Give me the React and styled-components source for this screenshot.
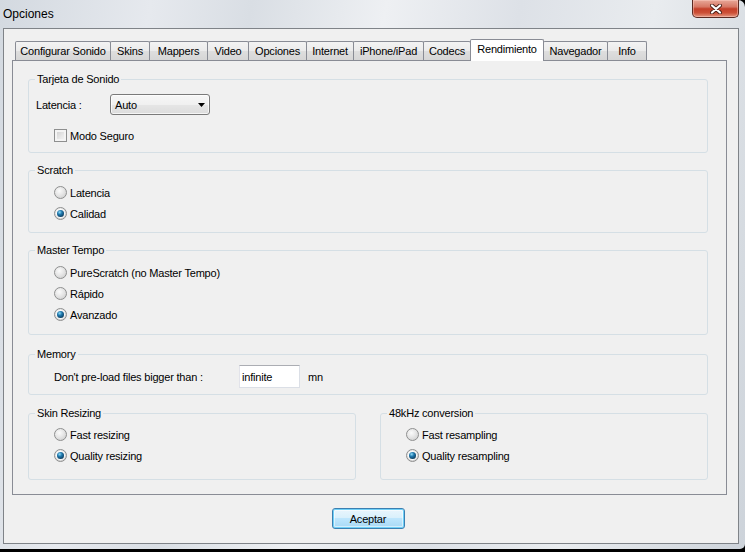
import React from "react";
import styled, { createGlobalStyle } from "styled-components";

const GlobalStyle = createGlobalStyle`
  html, body {
    margin: 0;
    padding: 0;
    background: #000;
  }
  body {
    width: 745px;
    height: 552px;
    overflow: hidden;
    font-family: "Liberation Sans", Arial, sans-serif;
    font-size: 11px;
    letter-spacing: -0.2px;
    color: #000;
  }
`;

const tabs = [
  { label: "Configurar Sonido", w: 96 },
  { label: "Skins", w: 40 },
  { label: "Mappers", w: 59 },
  { label: "Video", w: 42 },
  { label: "Opciones", w: 59 },
  { label: "Internet", w: 48 },
  { label: "iPhone/iPad", w: 71 },
  { label: "Codecs", w: 48 },
  { label: "Rendimiento", w: 74, active: true },
  { label: "Navegador", w: 65 },
  { label: "Info", w: 40 },
];

const CloseIcon = () => (
  <svg width="12" height="10" viewBox="0 0 12 10">
    <path d="M2 1.5 L10 8.5 M10 1.5 L2 8.5" stroke="#4a2018" strokeWidth="4" strokeLinecap="round" />
    <path d="M2 1.5 L10 8.5 M10 1.5 L2 8.5" stroke="#ffffff" strokeWidth="2.2" strokeLinecap="round" />
  </svg>
);

const ArrowDown = () => (
  <svg width="7" height="4" viewBox="0 0 7 4">
    <path d="M0 0 H7 L3.5 4 Z" fill="#000" />
  </svg>
);

const Radio = ({ checked, children }) => (
  <OptionRow>
    <RadioCircle>{checked && <RadioDot />}</RadioCircle>
    <OptionText>{children}</OptionText>
  </OptionRow>
);

const App = () => {
  return (
    <>
      <GlobalStyle />
      <Window>
        <TitleBar>
          <Title>Opciones</Title>
          <CloseButton>
            <CloseIcon />
          </CloseButton>
        </TitleBar>
        <Client>
          <TabStrip>
            {tabs.map((t) => (
              <Tab key={t.label} $w={t.w} $active={t.active}>
                {t.label}
              </Tab>
            ))}
          </TabStrip>
          <Panel>
            <Group $h={80}>
              <Legend>Tarjeta de Sonido</Legend>
              <GroupBody $pt={8} $pl={7}>
                <FieldRow $h={21}>
                  <FieldLabel $w={74}>Latencia :</FieldLabel>
                  <Combo>
                    <span>Auto</span>
                    <ArrowDown />
                  </Combo>
                </FieldRow>
                <OptionRow $mt={10} $ml={18}>
                  <CheckBox />
                  <OptionText>Modo Seguro</OptionText>
                </OptionRow>
              </GroupBody>
            </Group>

            <Group $h={69} $mt={11}>
              <Legend>Scratch</Legend>
              <GroupBody $pt={5} $pl={25}>
                <Radio>Latencia</Radio>
                <Radio checked>Calidad</Radio>
              </GroupBody>
            </Group>

            <Group $h={91} $mt={11}>
              <Legend>Master Tempo</Legend>
              <GroupBody $pt={5} $pl={25}>
                <Radio>PureScratch (no Master Tempo)</Radio>
                <Radio>Rápido</Radio>
                <Radio checked>Avanzado</Radio>
              </GroupBody>
            </Group>

            <Group $h={47} $mt={13}>
              <Legend>Memory</Legend>
              <GroupBody $pt={4} $pl={25}>
                <FieldRow $h={23}>
                  <FieldLabel $w={185}>Don't pre-load files bigger than :</FieldLabel>
                  <TextInput defaultValue="infinite" />
                  <Unit>mn</Unit>
                </FieldRow>
              </GroupBody>
            </Group>

            <Pair>
              <Group $h={73} $flex>
                <Legend>Skin Resizing</Legend>
                <GroupBody $pt={4} $pl={25}>
                  <Radio>Fast resizing</Radio>
                  <Radio checked>Quality resizing</Radio>
                </GroupBody>
              </Group>
              <Group $h={73} $flex>
                <Legend>48kHz conversion</Legend>
                <GroupBody $pt={4} $pl={25}>
                  <Radio>Fast resampling</Radio>
                  <Radio checked>Quality resampling</Radio>
                </GroupBody>
              </Group>
            </Pair>
          </Panel>
          <Footer>
            <DefaultButton>Aceptar</DefaultButton>
          </Footer>
        </Client>
      </Window>
    </>
  );
};

export default App;

const Window = styled.div`
  box-sizing: border-box;
  width: 745px;
  height: 549px;
  padding: 0 6px 6px 3px;
  display: flex;
  flex-direction: column;
  border-radius: 0 7px 5px 0;
  background: linear-gradient(
    100deg,
    #d3d9e0 0%,
    #e6e9ee 18%,
    #d9dee4 30%,
    #eef0f3 46%,
    #dde1e7 62%,
    #e9ecef 78%,
    #cdd3da 100%
  );
`;

const TitleBar = styled.div`
  height: 28px;
  display: flex;
  justify-content: space-between;
  align-items: flex-start;
`;

const Title = styled.div`
  font-size: 12px;
  letter-spacing: 0;
  line-height: 28px;
  color: #000;
`;

const CloseButton = styled.div`
  box-sizing: border-box;
  width: 47px;
  height: 18px;
  display: flex;
  align-items: center;
  justify-content: center;
  border: 1px solid #5b2a22;
  border-top: none;
  border-radius: 0 0 5px 5px;
  background: linear-gradient(
    #e8a898 0%,
    #d77865 40%,
    #c4402a 52%,
    #cc4f36 75%,
    #e39680 100%
  );
  box-shadow: inset 0 0 0 1px rgba(255, 210, 200, 0.45);
`;

const Client = styled.div`
  flex: 1;
  display: flex;
  flex-direction: column;
  border: 1px solid #7f8388;
  background: #f0f0f0;
  padding: 10px 11px 0 8px;
`;

const TabStrip = styled.div`
  height: 21px;
  display: flex;
  align-items: flex-end;
  padding-left: 3px;
`;

const Tab = styled.div`
  position: relative;
  box-sizing: border-box;
  width: ${(p) => p.$w}px;
  height: ${(p) => (p.$active ? 22 : 19)}px;
  margin-left: -1px;
  margin-bottom: ${(p) => (p.$active ? -1 : 0)}px;
  padding-bottom: ${(p) => (p.$active ? 3 : 0)}px;
  z-index: ${(p) => (p.$active ? 2 : 1)};
  display: flex;
  align-items: center;
  justify-content: center;
  white-space: nowrap;
  border: 1px solid #898c95;
  border-bottom: none;
  border-radius: 2px 2px 0 0;
  background: ${(p) =>
    p.$active
      ? "#ffffff"
      : "linear-gradient(#f3f3f3 0%, #ebebeb 50%, #dedede 51%, #d6d6d6 100%)"};

  &:first-child {
    margin-left: 0;
  }
`;

const Panel = styled.div`
  box-sizing: border-box;
  height: 435px;
  border: 1px solid #898c95;
  background: #f0f0f0;
  padding: 12px 18px 0 15px;
  display: flex;
  flex-direction: column;
`;

const Group = styled.fieldset`
  box-sizing: border-box;
  margin: ${(p) => p.$mt || 0}px 0 0;
  padding: 0;
  min-width: 0;
  height: ${(p) => p.$h}px;
  flex: ${(p) => (p.$flex ? "1 1 0" : "none")};
  border: 1px solid #d5dfe5;
  border-radius: 3px;
`;

const Legend = styled.legend`
  margin-left: 6px;
  padding: 0 2px;
  line-height: 13px;
  font-size: 11px;
`;

const GroupBody = styled.div`
  display: flex;
  flex-direction: column;
  padding: ${(p) => p.$pt}px 0 0 ${(p) => p.$pl}px;
`;

const FieldRow = styled.div`
  height: ${(p) => p.$h}px;
  display: flex;
  align-items: center;
`;

const FieldLabel = styled.div`
  width: ${(p) => p.$w}px;
  flex: none;
  white-space: nowrap;
`;

const Combo = styled.div`
  box-sizing: border-box;
  width: 100px;
  height: 21px;
  padding: 0 4px 0 4px;
  display: flex;
  align-items: center;
  justify-content: space-between;
  border: 1px solid #7a7a7a;
  border-radius: 3px;
  background: linear-gradient(#f7f7f7 0%, #f0f0f0 50%, #e6e6e6 51%, #dcdcdc 100%);
  box-shadow: inset 0 0 0 1px rgba(255, 255, 255, 0.7);
`;

const TextInput = styled.input`
  box-sizing: border-box;
  width: 61px;
  height: 23px;
  margin: 0;
  padding: 0 0 0 2px;
  font: inherit;
  letter-spacing: inherit;
  color: #000;
  background: #fff;
  border: 1px solid #dbdfe6;
  border-top-color: #abadb3;
  border-left-color: #e2e3ea;
  outline: none;
`;

const Unit = styled.span`
  margin-left: 8px;
`;

const OptionRow = styled.div`
  height: 21px;
  display: flex;
  align-items: center;
  margin-top: ${(p) => p.$mt || 0}px;
  margin-left: ${(p) => p.$ml || 0}px;
`;

const OptionText = styled.span`
  margin-left: 3px;
  white-space: nowrap;
`;

const RadioCircle = styled.div`
  box-sizing: border-box;
  width: 13px;
  height: 13px;
  flex: none;
  border-radius: 50%;
  border: 1px solid #8e8f8f;
  display: flex;
  align-items: center;
  justify-content: center;
  background: radial-gradient(circle at 40% 35%, #fbfbfb 0%, #e6e6e6 45%, #c9c9c9 100%);
`;

const RadioDot = styled.div`
  width: 7px;
  height: 7px;
  border-radius: 50%;
  background: radial-gradient(circle at 38% 32%, #8fdcf8 0%, #1f78ad 35%, #0a3351 85%);
  box-shadow: 0 0 0 1px rgba(255, 255, 255, 0.8);
`;

const CheckBox = styled.div`
  box-sizing: border-box;
  width: 13px;
  height: 13px;
  flex: none;
  border: 1px solid #8e8f8f;
  background: linear-gradient(135deg, #cbcbcb 0%, #e9e9e9 60%, #f7f7f7 100%);
  box-shadow: inset 0 0 0 2px #f4f4f4;
`;

const Pair = styled.div`
  display: flex;
  gap: 24px;
  margin-top: 12px;
`;

const Footer = styled.div`
  height: 48px;
  display: flex;
  justify-content: center;
  align-items: flex-start;
  padding-top: 13px;
  box-sizing: border-box;
`;

const DefaultButton = styled.div`
  box-sizing: border-box;
  width: 73px;
  height: 21px;
  margin-left: -3px;
  display: flex;
  align-items: center;
  justify-content: center;
  border: 1px solid #3c7fb1;
  border-radius: 3px;
  background: linear-gradient(#eaf6fd 0%, #d9f0fc 48%, #bee6fd 50%, #a7d9f5 100%);
  box-shadow: inset 0 0 0 1px #6fd0f7, inset 0 0 0 2px rgba(255, 255, 255, 0.5);
`;
